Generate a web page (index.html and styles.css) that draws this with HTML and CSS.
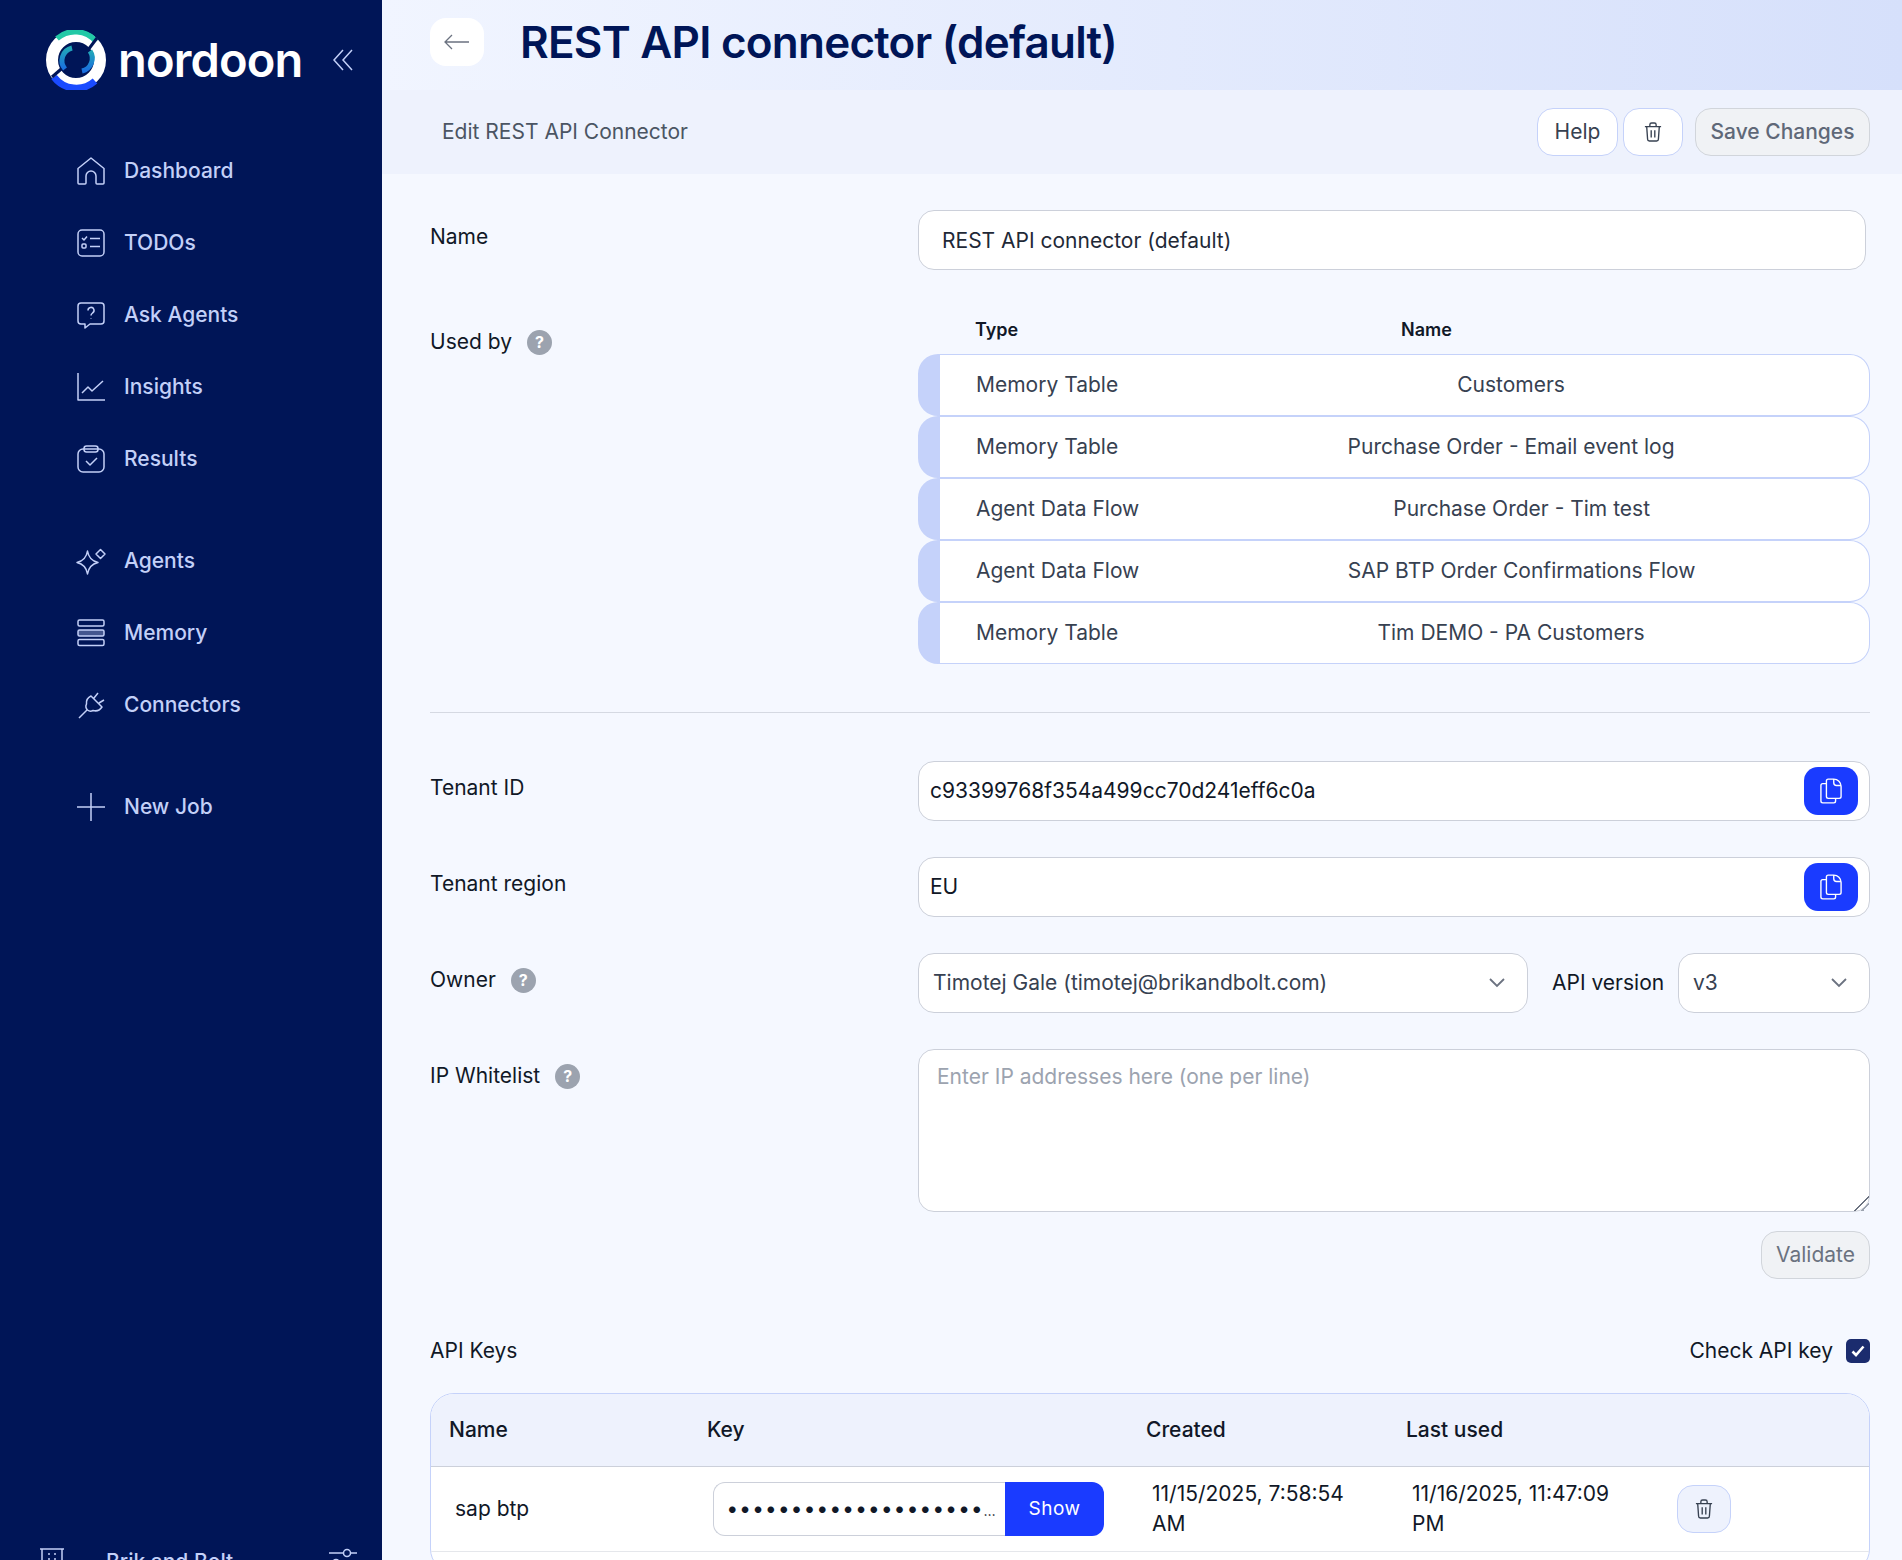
FILE: index.html
```html
<!DOCTYPE html>
<html lang="en">
<head>
<meta charset="utf-8">
<title>REST API connector (default)</title>
<link rel="stylesheet" href="styles.css">
</head>
<body>
<div class="app">
  <aside class="sidebar">
    <div class="brand">
      <svg class="logo-mark" viewBox="0 0 60 60" width="60" height="60" fill="none">
        <defs>
          <linearGradient id="inner" x1="0" y1="0" x2="0" y2="1"><stop offset="0" stop-color="#22a8b8"/><stop offset="1" stop-color="#1a6fe0"/></linearGradient>
        </defs>
        <circle cx="30" cy="30" r="24" stroke="#fff" stroke-width="12"/>
        <path d="M11 8.500A27.500 27.500 0 0 1 50 11.500" stroke="#22c9a6" stroke-width="5.500"/>
        <path d="M8 47A28 28 0 0 0 49 51" stroke="#1a4bff" stroke-width="7"/>
        <path d="M51 8L39 24" stroke="#001557" stroke-width="3"/>
        <path d="M6 47l15-13" stroke="#001557" stroke-width="3"/>
        <path d="M26 18A13 13 0 0 0 19 39" stroke="url(#inner)" stroke-width="5"/>
        <path d="M36 41A13 13 0 0 0 44 21" stroke="url(#inner)" stroke-width="5"/>
      </svg>
      <span class="logo-word">nordoon</span>
      <svg class="collapse" viewBox="0 0 20 22" width="20" height="22" fill="none" stroke="#c3d0f8" stroke-width="1.500">
        <path d="M10 1L1 11l9 10M19 1l-9 10 9 10"/>
      </svg>
    </div>
    <nav class="nav-group">
      <a class="nav-item"><svg class="nav-icon" viewBox="0 0 28 28"><path d="M1 11.500L14 1l13 10.500V26a1 1 0 0 1-1 1h-6a1 1 0 0 1-1-1v-7a5 5 0 0 0-10 0v7a1 1 0 0 1-1 1H2a1 1 0 0 1-1-1z"/></svg><span>Dashboard</span></a>
      <a class="nav-item"><svg class="nav-icon" viewBox="0 0 28 28"><rect x="1" y="1" width="26" height="26" rx="4"/><path d="M5 9l2 2 3-3.500M13 9.500h10M13 17.500h10"/><rect x="5" y="15" width="4" height="4" rx="1"/></svg><span>TODOs</span></a>
      <a class="nav-item"><svg class="nav-icon" viewBox="0 0 28 28"><path d="M4 2h20a3 3 0 0 1 3 3v15a3 3 0 0 1-3 3H13l-5 4v-4H4a3 3 0 0 1-3-3V5a3 3 0 0 1 3-3z"/><path d="M11 9.500a3 3 0 1 1 4.500 2.500c-1 .7-1.500 1.200-1.500 2.500M14 17.500v.5"/></svg><span>Ask Agents</span></a>
      <a class="nav-item"><svg class="nav-icon" viewBox="0 0 28 28"><path d="M1 0v27h27M5 20l6-6 4 4 11-10"/></svg><span>Insights</span></a>
      <a class="nav-item"><svg class="nav-icon" viewBox="0 0 28 28"><rect x="1" y="4" width="26" height="23" rx="5"/><rect x="7" y="1" width="14" height="6" rx="2.500"/><path d="M9 16l4 4 7-7"/></svg><span>Results</span></a>
    </nav>
    <nav class="nav-group">
      <a class="nav-item"><svg class="nav-icon" viewBox="0 0 28 28"><path d="M10.500 4c1 6.500 4 10 10.500 11.500-6.500 1.500-9.500 5-10.500 11.500-1-6.500-4-10-10.500-11.500 6.500-1.500 9.500-5 10.500-11.500z"/><path d="M23.500 2.500L28 7l-4.500 4.500L19 7z"/></svg><span>Agents</span></a>
      <a class="nav-item"><svg class="nav-icon" viewBox="0 0 28 28"><rect x="1" y="1" width="26" height="6" rx="1.500"/><rect class="nav-fill" x="1" y="11" width="26" height="6" rx="1.500"/><rect x="1" y="20.500" width="26" height="6" rx="1.500"/></svg><span>Memory</span></a>
      <a class="nav-item"><svg class="nav-icon" viewBox="0 0 28 28"><path d="M2 27l8-8M14 5l11 11c-2 3-5.500 4.500-9 3.500-1.800 1-4 .7-5.500-.5C9 17.500 8.500 15 9.500 13 9 9.500 11 6.500 14 5zM17 7l4-5M22 12l5-3"/></svg><span>Connectors</span></a>
    </nav>
    <nav class="nav-group">
      <a class="nav-item"><svg class="nav-icon" viewBox="0 0 28 28"><path d="M14 0v28M0 14h28"/></svg><span>New Job</span></a>
    </nav>
    <div class="side-footer">
      <svg class="foot-building" viewBox="0 0 24 26" width="24" height="26" fill="none" stroke="#c3d0f8" stroke-width="1.500"><path d="M0 1h24M2 1v25h20V1"/><path d="M8 6h2M14 6h2M8 11h2M14 11h2"/></svg>
      <span class="foot-name">Brik and Bolt</span>
      <svg class="foot-sliders" viewBox="0 0 28 20" width="28" height="20" fill="none" stroke="#c3d0f8" stroke-width="1.500"><path d="M0 5h14M21 5h7M0 15h4M11 15h17"/><circle cx="18" cy="5" r="3.500"/><circle cx="7" cy="15" r="3.500"/></svg>
    </div>
  </aside>

  <main class="main">
    <header class="title-bar">
      <button class="back-btn" aria-label="Back"><svg viewBox="0 0 26 16" width="26" height="16" fill="none" stroke="#6b7280" stroke-width="1.300"><path d="M25 8H1M8 1L1 8l7 7"/></svg></button>
      <h1 class="page-title">REST API connector (default)</h1>
    </header>
    <div class="sub-bar">
      <span class="sub-title">Edit REST API Connector</span>
      <div class="sub-actions">
        <button class="btn btn-white btn-help">Help</button>
        <button class="btn btn-white btn-icon" aria-label="Delete"><svg class="trash" viewBox="0 0 20 22"><path d="M1 5h18M6.500 5V3a2 2 0 0 1 2-2h3a2 2 0 0 1 2 2v2M3 5l1 14a2 2 0 0 0 2 2h8a2 2 0 0 0 2-2l1-14M8 9v8M12 9v8"/></svg></button>
        <button class="btn btn-disabled btn-save">Save Changes</button>
      </div>
    </div>

    <div class="form">
      <div class="row row-name">
        <label class="label label-name">Name</label>
        <input class="field field-name" value="REST API connector (default)">
      </div>

      <div class="row row-used">
        <label class="label label-used">Used by <span class="help-dot">?</span></label>
        <div class="used">
          <div class="used-head"><span>Type</span><span>Name</span></div>
          <div class="used-row"><span class="used-type">Memory Table</span><span class="used-name">Customers</span></div>
          <div class="used-row"><span class="used-type">Memory Table</span><span class="used-name">Purchase Order - Email event log</span></div>
          <div class="used-row"><span class="used-type">Agent Data Flow</span><span class="used-name">Purchase Order - Tim test</span></div>
          <div class="used-row"><span class="used-type">Agent Data Flow</span><span class="used-name">SAP BTP Order Confirmations Flow</span></div>
          <div class="used-row"><span class="used-type">Memory Table</span><span class="used-name">Tim DEMO - PA Customers</span></div>
        </div>
      </div>

      <hr class="divider">

      <div class="row row-std">
        <label class="label">Tenant ID</label>
        <div class="copy-field"><span>c93399768f354a499cc70d241eff6c0a</span>
          <button class="copy-btn" aria-label="Copy"><svg class="copy-icon" viewBox="0 0 24 28"><path d="M7 6H3a2 2 0 0 0-2 2v17a2 2 0 0 0 2 2h12a2 2 0 0 0 2-2v-3"/><path d="M9 1h6a8 8 0 0 1 8 8v11a2 2 0 0 1-2 2H9a2 2 0 0 1-2-2V3a2 2 0 0 1 2-2z"/><path d="M15 1v4a3 3 0 0 0 3 3h5"/></svg></button>
        </div>
      </div>
      <div class="row row-std">
        <label class="label">Tenant region</label>
        <div class="copy-field"><span>EU</span>
          <button class="copy-btn" aria-label="Copy"><svg class="copy-icon" viewBox="0 0 24 28"><path d="M7 6H3a2 2 0 0 0-2 2v17a2 2 0 0 0 2 2h12a2 2 0 0 0 2-2v-3"/><path d="M9 1h6a8 8 0 0 1 8 8v11a2 2 0 0 1-2 2H9a2 2 0 0 1-2-2V3a2 2 0 0 1 2-2z"/><path d="M15 1v4a3 3 0 0 0 3 3h5"/></svg></button>
        </div>
      </div>
      <div class="row row-std">
        <label class="label">Owner <span class="help-dot">?</span></label>
        <div class="owner-line">
          <div class="select select-owner"><span>Timotej Gale (timotej@brikandbolt.com)</span><svg class="chev" viewBox="0 0 16 10"><path d="M1 1l7 7 7-7"/></svg></div>
          <span class="api-label">API version</span>
          <div class="select select-api"><span>v3</span><svg class="chev" viewBox="0 0 16 10"><path d="M1 1l7 7 7-7"/></svg></div>
        </div>
      </div>
      <div class="row row-ip">
        <label class="label">IP Whitelist <span class="help-dot">?</span></label>
        <div class="ip-col">
          <textarea class="ip-area" placeholder="Enter IP addresses here (one per line)"></textarea>
          <button class="btn btn-disabled btn-validate">Validate</button>
        </div>
      </div>

      <div class="keys-head">
        <span class="label">API Keys</span>
        <div class="check-line"><span>Check API key</span>
          <span class="checkbox"><svg viewBox="0 0 14 12" width="14" height="12" fill="none" stroke="#fff" stroke-width="2.600"><path d="M1.500 6.500L5 10l7.500-8.500"/></svg></span>
        </div>
      </div>

      <div class="keys">
        <div class="keys-grid keys-top"><span>Name</span><span>Key</span><span>Created</span><span>Last used</span><span></span></div>
        <div class="keys-grid keys-row">
          <div class="cell">sap btp</div>
          <div class="cell key-cell"><div class="key-box"><span class="key-dots">••••••••••••••••••••</span><span class="key-more">…</span></div><button class="show-btn">Show</button></div>
          <div class="cell cell-date">11/15/2025, 7:58:54 AM</div>
          <div class="cell cell-date">11/16/2025, 11:47:09 PM</div>
          <div class="cell"><button class="row-trash" aria-label="Delete key"><svg class="trash" viewBox="0 0 20 22"><path d="M1 5h18M6.500 5V3a2 2 0 0 1 2-2h3a2 2 0 0 1 2 2v2M3 5l1 14a2 2 0 0 0 2 2h8a2 2 0 0 0 2-2l1-14M8 9v8M12 9v8"/></svg></button></div>
        </div>
      </div>
    </div>
  </main>
</div>
</body>
</html>
```

FILE: styles.css
```css
* { box-sizing: border-box; }
html, body { margin: 0; padding: 0; height: 1560px; overflow: hidden; }
body { font-family: Inter, "Noto Sans", sans-serif; font-size: 21px; line-height: 30px; color: #111827; background: #f5f8ff; }
button, input, textarea { font: inherit; color: inherit; }

.app { display: flex; height: 1560px; overflow: hidden; align-items: flex-start; }

/* Sidebar */
.sidebar { width: 382px; flex: none; height: 1600px; background: #001557; display: flex; flex-direction: column; }
.brand { height: 135px; flex: none; display: flex; align-items: center; padding: 0 0 15px 46px; }
.logo-mark { flex: none; }
.logo-word { margin-left: 12px; font-size: 47px; font-weight: 600; line-height: 60px; color: #fff; letter-spacing: -0.85px; width: 198px; }
.collapse { flex: none; margin-left: 17px; }
.nav-group { display: flex; flex-direction: column; margin-bottom: 30px; flex: none; }
.nav-item { height: 72px; padding-left: 77px; display: flex; align-items: center; gap: 19px; color: #c3d0f8; font-weight: 500; }
.nav-icon { width: 28px; height: 28px; flex: none; fill: none; stroke: #c3d0f8; stroke-width: 1.500; stroke-linejoin: round; overflow: visible; }
.nav-fill { fill: rgba(195, 208, 248, .35); }
.side-footer { margin-top: auto; height: 52px; display: flex; align-items: flex-start; padding-left: 40px; color: #c3d0f8; font-weight: 500; }
.foot-name { margin-left: 42px; width: 223px; line-height: 28px; }
.foot-building { flex: none; }

/* Main */
.main { flex: 1; min-width: 0; }
.title-bar { height: 90px; display: flex; align-items: center; gap: 36px; padding: 0 48px 6px; background: linear-gradient(90deg, #f1f5ff 0%, #d6e0fb 100%); }
.back-btn { width: 54px; height: 48px; background: #fff; border: 0; border-radius: 16px; display: flex; align-items: center; justify-content: center; padding: 0; flex: none; }
.page-title { margin: 0; font-size: 44px; line-height: 56px; font-weight: 600; color: #001557; letter-spacing: -0.76px; }
.sub-bar { height: 84px; background: #eef2fd; display: flex; align-items: center; justify-content: space-between; padding: 0 32px 0 60px; }
.sub-title { color: #4b5563; }
.sub-actions { display: flex; align-items: center; }
.btn { height: 48px; border-radius: 16px; display: flex; align-items: center; justify-content: center; padding: 0; }
.btn-white { background: #fff; border: 1px solid #c5d2fa; color: #374151; }
.btn-help { width: 81px; }
.btn-icon { width: 60px; margin-left: 5px; }
.btn-disabled { background: #f0f2f5; border: 1px solid #d1d5db; color: #6b7280; }
.btn-save { width: 175px; margin-left: 12px; font-weight: 500; color: #5f6878; }
.trash { width: 18px; height: 20px; fill: none; stroke: #374151; stroke-width: 1.500; }

/* Form */
.form { padding: 36px 32px 0 48px; }
.row { display: grid; grid-template-columns: 488px 1fr; }
.label { display: flex; align-items: center; gap: 15px; height: 30px; font-weight: 400; color: #111827; }
.row-name .field-name { width: 948px; }
.label-name { margin-top: 12px; }
.field { height: 60px; background: #fff; border: 1px solid #ccd0da; border-radius: 16px; padding: 0 23px; outline: none; color: #1f2937; }
.row-used { margin-top: 46px; }
.label-used { margin-top: 11px; }
.help-dot { width: 25px; height: 25px; border-radius: 50%; background: #9ca3af; color: #fff; font-size: 16px; font-weight: 700; line-height: 25px; text-align: center; flex: none; }
.used-head { height: 38px; display: grid; grid-template-columns: 426px 1fr; padding: 1px 0 0 57px; font-size: 18px; font-weight: 600; line-height: 26px; }
.used-row { height: 62px; background: #fff; border: 1px solid #c5d2fa; border-left: 22px solid #c5d2fa; border-radius: 20px; display: flex; align-items: center; padding: 0 19px 0 36px; color: #374151; }
.used-type { margin-right: 54px; flex: none; }
.used-name { flex: 1; text-align: center; }
.divider { border: 0; height: 1px; background: #d5d9e2; margin: 48px 0 48px; }
.row-std { margin-bottom: 36px; }
.row-std .label { margin-top: 12px; }
.copy-field { height: 60px; background: #fff; border: 1px solid #ccd0da; border-radius: 16px; display: flex; align-items: center; justify-content: space-between; padding: 0 11px 0 11px; color: #111827; }
.copy-btn { width: 54px; height: 48px; border: 0; border-radius: 14px; background: #1a3bff; display: flex; align-items: center; justify-content: center; padding: 0; }
.copy-icon { width: 22px; height: 26px; fill: none; stroke: #fff; stroke-width: 1.500; }
.owner-line { display: flex; align-items: center; }
.select { height: 60px; background: #fff; border: 1px solid #ccd0da; border-radius: 16px; display: flex; align-items: center; justify-content: space-between; color: #374151; }
.select-owner { width: 610px; padding: 0 22px 0 14px; }
.select-api { width: 192px; padding: 0 22px 0 14px; }
.api-label { margin: 0 13px 0 24px; width: 113px; white-space: nowrap; }
.chev { width: 16px; height: 10px; fill: none; stroke: #6b7280; stroke-width: 1.800; }
.row-ip .label { margin-top: 12px; }
.ip-col { display: flex; flex-direction: column; align-items: flex-end; }
.ip-area { display: block; width: 100%; height: 163px; background: #fff; border: 1px solid #ccd0da; border-radius: 16px; padding: 12px 18px; outline: none; line-height: 30px; }
.ip-area::placeholder { color: #9ca3af; opacity: 1; }
.ip-area::-webkit-resizer { background: linear-gradient(135deg, transparent 48%, #6b7280 48%, #6b7280 56%, transparent 56%, transparent 72%, #9ca3af 72%, #9ca3af 80%, transparent 80%); }
.btn-validate { width: 109px; margin-top: 19px; }
.keys-head { margin-top: 57px; display: flex; justify-content: space-between; align-items: center; }
.check-line { display: flex; align-items: center; gap: 13px; }
.checkbox { width: 24px; height: 24px; border-radius: 5px; background: #1b2c6e; display: flex; align-items: center; justify-content: center; }
.keys { margin-top: 27px; border: 1px solid #c5d2fa; border-radius: 24px; overflow: hidden; background: #fff; height: 180px; }
.keys-grid { display: grid; grid-template-columns: 258px 439px 260px 260px 1fr; padding-left: 18px; }
.keys-top { height: 73px; background: #eef2fd; align-items: center; font-weight: 500; border-bottom: 1px solid #ccd0da; }
.keys-row { height: 85px; align-items: center; border-bottom: 1px solid #e5e7eb; }
.cell { padding-left: 6px; color: #111827; }
.cell-date { padding-right: 40px; }
.key-cell { display: flex; align-items: center; padding-right: 42px; }
.key-box { height: 54px; width: 292px; flex: none; border: 1px solid #ccd0da; border-right: 0; border-radius: 12px 0 0 12px; padding: 0 0 0 13px; display: flex; align-items: center; background: #fff; white-space: nowrap; }
.key-dots { color: #111827; letter-spacing: 2.3px; font-weight: 600; }
.key-more { color: #111827; font-size: 14px; margin-left: -1px; padding-top: 4px; }
.show-btn { width: 99px; height: 54px; flex: none; background: #1a3bff; border: 0; color: #fff; border-radius: 0 12px 12px 0; padding: 0; font-size: 19px; letter-spacing: .5px; }
.row-trash { width: 54px; height: 48px; margin-left: 5px; background: #eef2fd; border: 1px solid #c5d2fa; border-radius: 16px; display: flex; align-items: center; justify-content: center; padding: 0; }
```
